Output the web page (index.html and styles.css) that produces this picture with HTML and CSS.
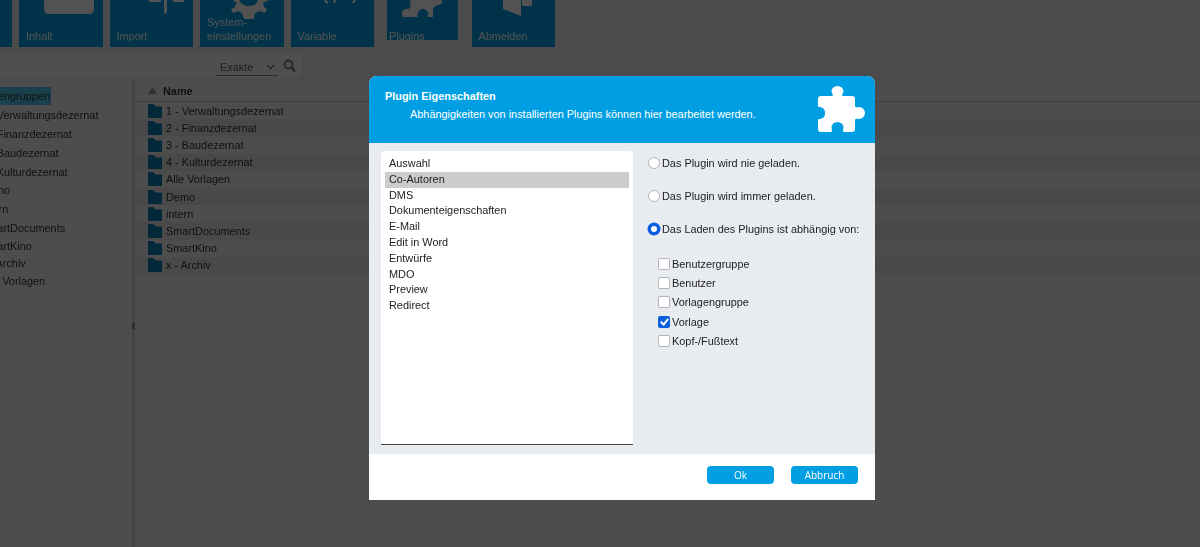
FILE: index.html
```html
<!DOCTYPE html>
<html lang="de">
<head>
    <meta charset="UTF-8">
    <meta name="viewport" content="width=device-width, initial-scale=1.0">
    <title>Plugin Eigenschaften</title>
    <link rel="stylesheet" href="styles.css">
</head>
<body>
    <div class="page">
        <div class="toolbar">
            <div class="tile tile-first"></div>
            <div class="tile">
                <svg class="tile-icon" width="50" height="16" viewBox="0 0 50 16"><path d="M0 0H50V9Q50 14 45 14H5Q0 14 0 9Z" fill="#fff"/></svg>
                <span>Inhalt</span>
            </div>
            <div class="tile">
                <svg class="tile-icon tile-icon-import" width="36" height="16" viewBox="0 0 36 16"><path d="M0 0H12V2H0ZM24 0H35V2H24ZM15 0H18V12Q18 13.500 16.500 13.500T15 12Z" fill="#fff"/></svg>
                <span>Import</span>
            </div>
            <div class="tile">
                <svg class="tile-icon tile-icon-gear" width="46" height="20" viewBox="0 0 46 20"><path d="M5 0L9 3 6 8 3 9 5 13 10 11 14 13 16 19H26L27 13 32 11 37 13 39 9 36 7 35 3 41 0H30Q28 6 21 6T11 0Z" fill="#fff"/></svg>
                <span>System-<br>einstellungen</span>
            </div>
            <div class="tile">
                <svg class="tile-icon tile-icon-vars" width="36" height="8" viewBox="0 0 36 8"><path d="M1 0Q2 2 4 3M11 0L10 3M31 0L29 3" stroke="#fff" stroke-width="2.200" fill="none"/></svg>
                <span>Variable</span>
            </div>
            <div class="tile tile-active">
                <svg class="tile-icon" width="42" height="18" viewBox="0 0 42 18"><path d="M8 0H40V3Q36 6 33 6L31 9 31 17H25Q28 13 24 10T17 11 16 17H2Q0 17 0 14 0 9 5 9T8 3Z" fill="#fff"/></svg>
                <span>Plugins</span>
            </div>
            <div class="tile">
                <svg class="tile-icon tile-icon-door" width="30" height="16" viewBox="0 0 30 16"><path d="M0 0H18V16L0 9ZM19 0H29V6H19Z" fill="#fff"/></svg>
                <span>Abmelden</span>
            </div>
        </div>

        <div class="searchbar">
            <div class="search-select">
                <span>Exakte</span>
                <svg width="9" height="6" viewBox="0 0 9 6"><path d="M1 1l3.500 3.500L8 1" stroke="#777" stroke-width="1.300" fill="none"/></svg>
            </div>
            <svg class="search-icon" width="13" height="14" viewBox="0 0 13 14"><circle cx="5.500" cy="5.500" r="4" stroke="#777" stroke-width="1.800" fill="none"/><path d="M8.500 8.500l3.500 4" stroke="#777" stroke-width="2.200"/></svg>
        </div>

        <div class="main">
            <div class="tree">
                <div class="tree-row tree-root"><span class="tree-selected">Vorlagengruppen</span></div>
                <div class="tree-row">1 - Verwaltungsdezernat</div>
                <div class="tree-row">2 - Finanzdezernat</div>
                <div class="tree-row">3 - Baudezernat</div>
                <div class="tree-row">4 - Kulturdezernat</div>
                <div class="tree-row">Demo</div>
                <div class="tree-row">intern</div>
                <div class="tree-row">SmartDocuments</div>
                <div class="tree-row tree-row-short">SmartKino</div>
                <div class="tree-row tree-row-short">x - Archiv</div>
                <div class="tree-row tree-row-short">Alle Vorlagen</div>
            </div>
            <div class="splitter"><span class="splitter-grip"></span></div>
            <div class="files">
                <div class="files-head">
                    <svg width="9" height="7" viewBox="0 0 9 7"><path d="M4.500 0L9 7H0z" fill="#999"/></svg>
                    <b>Name</b>
                </div>
                <div class="file-row"><svg class="folder" viewBox="0 0 14 14"><path d="M0 0h5l3 2.500h6V14H0z"/></svg>1 - Verwaltungsdezernat</div>
                <div class="file-row"><svg class="folder" viewBox="0 0 14 14"><path d="M0 0h5l3 2.500h6V14H0z"/></svg>2 - Finanzdezernat</div>
                <div class="file-row"><svg class="folder" viewBox="0 0 14 14"><path d="M0 0h5l3 2.500h6V14H0z"/></svg>3 - Baudezernat</div>
                <div class="file-row"><svg class="folder" viewBox="0 0 14 14"><path d="M0 0h5l3 2.500h6V14H0z"/></svg>4 - Kulturdezernat</div>
                <div class="file-row"><svg class="folder" viewBox="0 0 14 14"><path d="M0 0h5l3 2.500h6V14H0z"/></svg>Alle Vorlagen</div>
                <div class="file-row"><svg class="folder" viewBox="0 0 14 14"><path d="M0 0h5l3 2.500h6V14H0z"/></svg>Demo</div>
                <div class="file-row"><svg class="folder" viewBox="0 0 14 14"><path d="M0 0h5l3 2.500h6V14H0z"/></svg>intern</div>
                <div class="file-row"><svg class="folder" viewBox="0 0 14 14"><path d="M0 0h5l3 2.500h6V14H0z"/></svg>SmartDocuments</div>
                <div class="file-row"><svg class="folder" viewBox="0 0 14 14"><path d="M0 0h5l3 2.500h6V14H0z"/></svg>SmartKino</div>
                <div class="file-row"><svg class="folder" viewBox="0 0 14 14"><path d="M0 0h5l3 2.500h6V14H0z"/></svg>x - Archiv</div>
            </div>
        </div>
    </div>

    <div class="overlay">
        <div class="modal">
            <div class="modal-header">
                <div class="modal-titles">
                    <h2>Plugin Eigenschaften</h2>
                    <p>Abhängigkeiten von installierten Plugins können hier bearbeitet werden.</p>
                </div>
                <svg class="modal-icon" width="47" height="46" viewBox="0 0 47 46"><path d="M3 10H14.500C15.500 8 13.500 7 13.500 5.500A6 5.500 0 0 1 25.500 5.500C25.500 7 23.500 8 24.500 10H34Q37 10 37 13V20.500C38.500 22 40 21 41 21A6 6 0 0 1 41 33C40 33 38.500 32 37 33.500V43Q37 46 34 46H25.500C24.500 44 25.500 43 25.500 41.500A6 5.500 0 0 0 13.500 41.500C13.500 43 14.500 44 13.500 46H3Q0 46 0 43V33.500C2 33 7 33 7 27C7 21 2 21 0 20.500V13Q0 10 3 10Z" fill="#fff"/></svg>
            </div>
            <div class="modal-body">
                <ul class="plugin-list">
                    <li>Auswahl</li>
                    <li class="selected">Co-Autoren</li>
                    <li>DMS</li>
                    <li>Dokumenteigenschaften</li>
                    <li>E-Mail</li>
                    <li>Edit in Word</li>
                    <li>Entwürfe</li>
                    <li>MDO</li>
                    <li>Preview</li>
                    <li>Redirect</li>
                </ul>
                <div class="plugin-options">
                    <label class="radio-row"><input type="radio" name="load">Das Plugin wird nie geladen.</label>
                    <label class="radio-row"><input type="radio" name="load">Das Plugin wird immer geladen.</label>
                    <label class="radio-row"><input type="radio" name="load" checked>Das Laden des Plugins ist abhängig von:</label>
                    <div class="check-group">
                        <label class="check-row"><input type="checkbox">Benutzergruppe</label>
                        <label class="check-row"><input type="checkbox">Benutzer</label>
                        <label class="check-row"><input type="checkbox">Vorlagengruppe</label>
                        <label class="check-row"><input type="checkbox" checked>Vorlage</label>
                        <label class="check-row"><input type="checkbox">Kopf-/Fußtext</label>
                    </div>
                </div>
            </div>
            <div class="modal-footer">
                <button>Ok</button>
                <button>Abbruch</button>
            </div>
        </div>
    </div>
</body>
</html>
```

FILE: styles.css
```css
html, body {
    margin: 0;
    padding: 0;
    height: 100%;
    overflow: hidden;
    font-family: "Liberation Sans", Arial, sans-serif;
}

/* Page behind the dialog */
.page {
    height: 547px;
    background-color: #e8e8e8;
    overflow: hidden;
    font-size: 10.900px;
    color: #333;
    filter: blur(0.4px);
}

.toolbar {
    display: flex;
    gap: 7px;
    height: 47px;
    align-items: flex-start;
}

.tile {
    position: relative;
    flex: none;
    box-sizing: border-box;
    width: 83.500px;
    height: 47px;
    background-color: #009fe3;
    color: #fff;
    padding: 0 0 4px 7px;
    display: flex;
    flex-direction: column;
    justify-content: flex-end;
    line-height: 13.500px;
    overflow: hidden;
}

.tile-first {
    width: 12px;
}

.tile-icon {
    position: absolute;
    left: 25px;
    top: 0;
}

.tile-icon-import {
    left: 39px;
}

.tile-icon-gear {
    left: 28px;
}

.tile-icon-vars {
    left: 33px;
}

.tile-icon-door {
    left: 31px;
}

.tile-active {
    width: 71px;
    height: 40px;
    margin: 0 6.500px 0 6px;
    padding: 30px 0 0 2px;
    justify-content: flex-start;
}

.tile-active .tile-icon {
    left: 15px;
}

.searchbar {
    display: flex;
    align-items: center;
    justify-content: flex-end;
    box-sizing: border-box;
    width: 302px;
    height: 26px;
    margin-top: 5px;
    padding: 4px 6px 0 0;
    background-color: #f4f4f4;
    border-radius: 0 6px 6px 0;
}

.search-select {
    display: flex;
    align-items: center;
    justify-content: space-between;
    box-sizing: border-box;
    width: 63px;
    height: 17px;
    margin-right: 5px;
    padding: 0 3px 0 5px;
    border-bottom: 1px solid #888;
    color: #666;
}

.search-icon {
    margin-bottom: 2px;
}

.main {
    display: flex;
    height: 467px;
    margin-top: 2px;
}

.tree {
    flex: none;
    box-sizing: border-box;
    width: 132px;
    padding-top: 7px;
    background-color: #efefef;
    border-radius: 0 6px 0 0;
    overflow: hidden;
}

.tree-row {
    height: 18.900px;
    line-height: 18px;
    margin-left: -19px;
    white-space: nowrap;
}

.tree-row-short {
    height: 17.200px;
    line-height: 17px;
}

.tree-root {
    margin-left: -33px;
}

.tree-selected {
    display: inline-block;
    padding-right: 1px;
    background-color: #55c8f0;
}

.splitter {
    position: relative;
    flex: none;
    width: 3px;
    background-color: #c8d0dc;
}

.splitter-grip {
    position: absolute;
    left: 0;
    top: 243px;
    width: 3px;
    height: 6px;
    background-color: #888;
}

.files {
    flex: auto;
    background-color: #efefef;
}

.files-head {
    display: flex;
    align-items: center;
    gap: 6px;
    box-sizing: border-box;
    height: 22px;
    padding-left: 13px;
    border-bottom: 1px solid #bbb;
}

.file-row {
    display: flex;
    align-items: center;
    gap: 4px;
    height: 17.200px;
    padding-left: 13px;
    white-space: nowrap;
}

.file-row:nth-child(odd) {
    background-color: #e2e4e7;
}

.folder {
    width: 14px;
    height: 14px;
    fill: #0a7cb0;
}

/* Dialog */
.overlay {
    position: fixed;
    top: 0;
    left: 0;
    width: 100%;
    height: 100%;
    background-color: rgba(0, 0, 0, 0.68);
}

.modal {
    width: 506px;
    height: 424px;
    margin: 76px 0 0 369px;
    border-radius: 8px 8px 0 0;
    overflow: hidden;
    background-color: #fff;
    display: flex;
    flex-direction: column;
    font-size: 10.900px;
    color: #222;
}

.modal-header {
    display: flex;
    justify-content: space-between;
    flex: none;
    box-sizing: border-box;
    height: 67px;
    padding: 14px 10px 0 16px;
    background-color: #009fe3;
    color: #fff;
}

.modal-titles h2 {
    margin: 0;
    font-size: 10.900px;
    line-height: 13px;
    font-weight: bold;
}

.modal-titles p {
    margin: 5px 0 0 25px;
    line-height: 13px;
}

.modal-icon {
    margin-top: -4px;
}

.modal-body {
    display: flex;
    flex: auto;
    background-color: #e8ebf0;
    padding: 8px 0 0 12px;
}

.plugin-list {
    flex: none;
    box-sizing: border-box;
    list-style-type: none;
    width: 252px;
    height: 294px;
    margin: 0;
    padding: 5px 4px;
    background-color: #fff;
    border-radius: 4px 4px 0 0;
    border-bottom: 1px solid #444;
}

.plugin-list li {
    height: 15.800px;
    line-height: 15.800px;
    padding-left: 4px;
}

.plugin-list .selected {
    background-color: #ccc;
}

.plugin-options {
    display: flex;
    flex-direction: column;
    margin-left: 15px;
    padding-top: 5px;
}

.radio-row, .check-row {
    display: flex;
    align-items: center;
    gap: 2px;
}

.radio-row {
    height: 14px;
    margin-bottom: 19px;
}

.check-group {
    margin: -1px 0 0 10px;
}

.check-row {
    height: 19.300px;
}

input {
    appearance: none;
    flex: none;
    position: relative;
    box-sizing: border-box;
    width: 12px;
    height: 12px;
    margin: 0;
    background-color: #fff;
    border: 1px solid #b5b5bb;
}

input[type="radio"] {
    border-radius: 50%;
}

input[type="radio"]:checked {
    border: 3px solid #0a5fe0;
    box-shadow: 0 0 0 0.5px #0a5fe0;
}

input[type="checkbox"] {
    border-radius: 2px;
}

input[type="checkbox"]:checked {
    background-color: #0a5fe0;
    border-color: #0a5fe0;
}

input[type="checkbox"]:checked::after {
    content: "";
    position: absolute;
    left: 3px;
    top: 0;
    width: 3px;
    height: 6px;
    border: solid #fff;
    border-width: 0 2px 2px 0;
    transform: rotate(40deg);
}

.modal-footer {
    display: flex;
    justify-content: flex-end;
    gap: 17px;
    flex: none;
    height: 46px;
    padding: 12px 17px 0 0;
    box-sizing: border-box;
}

.modal-footer button {
    width: 67px;
    height: 18px;
    padding: 0;
    border: none;
    border-radius: 4px;
    background-color: #009fe3;
    color: #fff;
    font-family: "Open Sans", sans-serif;
    font-size: 10px;
    line-height: 18px;
}
```
